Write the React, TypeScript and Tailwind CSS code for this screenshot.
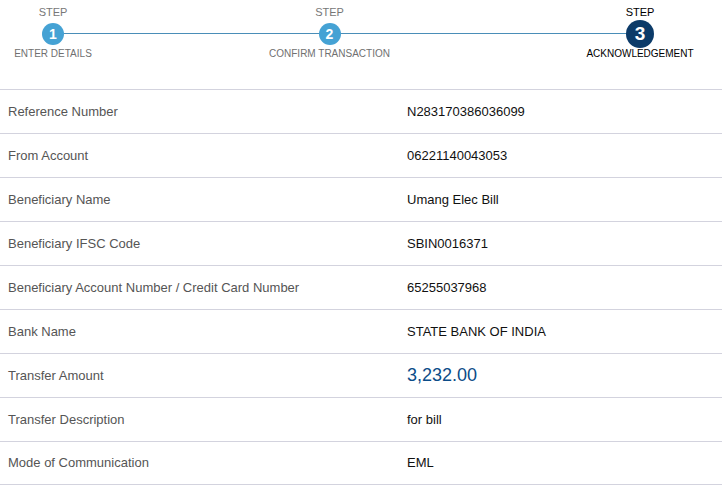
import React from "react";

const rows: { label: string; value: string; amount?: boolean }[] = [
  { label: "Reference Number", value: "N283170386036099" },
  { label: "From Account", value: "06221140043053" },
  { label: "Beneficiary Name", value: "Umang Elec Bill" },
  { label: "Beneficiary IFSC Code", value: "SBIN0016371" },
  { label: "Beneficiary Account Number / Credit Card Number", value: "65255037968" },
  { label: "Bank Name", value: "STATE BANK OF INDIA" },
  { label: "Transfer Amount", value: "3,232.00", amount: true },
  { label: "Transfer Description", value: "for bill" },
  { label: "Mode of Communication", value: "EML" },
];

export default function App() {
  return (
    <div className="w-[722px] h-[487px] bg-white overflow-hidden" style={{ fontFamily: '"Liberation Sans", Arial, Helvetica, sans-serif' }}>
      <div className="relative h-[89px]">
        <div className="absolute left-[53px] w-[587px] top-[33px] h-[1px] bg-[#4a8eb8]" />
        <div className="relative flex pt-[5px]">
          <div className="w-[106px] flex flex-col items-center">
            <div className="text-[11px] leading-[14px] text-[#777]">STEP</div>
            <div className="h-[29px] flex items-center">
              <div className="w-[22px] h-[22px] rounded-full bg-[#45a2d4] flex items-center justify-center text-white font-bold text-[14px] leading-none">1</div>
            </div>
            <div className="text-[10px] leading-[12px] text-[#707070] whitespace-nowrap">ENTER DETAILS</div>
          </div>
          <div className="ml-[154px] w-[139px] flex flex-col items-center">
            <div className="text-[11px] leading-[14px] text-[#777]">STEP</div>
            <div className="h-[29px] flex items-center">
              <div className="w-[22px] h-[22px] rounded-full bg-[#45a2d4] flex items-center justify-center text-white font-bold text-[14px] leading-none">2</div>
            </div>
            <div className="text-[10px] leading-[12px] text-[#707070] whitespace-nowrap">CONFIRM TRANSACTION</div>
          </div>
          <div className="ml-[176px] w-[130px] flex flex-col items-center">
            <div className="text-[11px] leading-[14px] text-black">STEP</div>
            <div className="h-[29px] flex items-center">
              <div className="w-[28px] h-[28px] rounded-full bg-[#0c3b69] flex items-center justify-center text-white font-bold text-[19px] leading-none">3</div>
            </div>
            <div className="text-[10px] leading-[12px] text-black whitespace-nowrap">ACKNOWLEDGEMENT</div>
          </div>
        </div>
      </div>
      <div>
        {rows.map((r, i) => (
          <div
            key={r.label}
            className={`flex items-center h-[44px] border-t border-[#d3d3de] ${i === rows.length - 1 ? "border-b" : ""}`}
          >
            <div className="w-[399px] pl-[8px] text-[13px] text-[#555]">{r.label}</div>
            <div className={r.amount ? "pl-[8px] text-[18px] text-[#0b4c88]" : "pl-[8px] text-[13px] text-[#111]"}>{r.value}</div>
          </div>
        ))}
      </div>
    </div>
  );
}
